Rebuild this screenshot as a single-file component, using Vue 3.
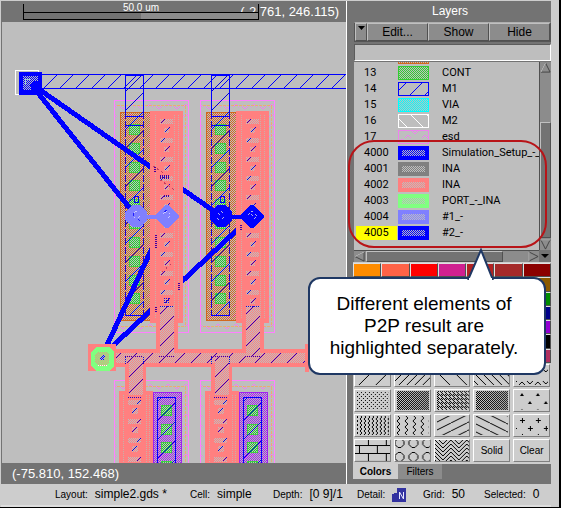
<script setup>
import { ref } from 'vue'

const filter = ref('')
const selectedId = ref(4005)

const layers = [
  { id: 13, name: 'CONT', color: '#32cd32', kind: 'checker' },
  { id: 14, name: 'M1', color: '#0000ff', kind: 'slash' },
  { id: 15, name: 'VIA', color: '#00ffff', kind: 'checker' },
  { id: 16, name: 'M2', color: '#ffffff', kind: 'backslash' },
  { id: 17, name: 'esd', color: '#ee82ee', kind: 'caret' },
  { id: 4000, name: 'Simulation_Setup_-_', color: '#0000ff', kind: 'framed' },
  { id: 4001, name: 'INA', color: '#808080', kind: 'framed' },
  { id: 4002, name: 'INA', color: '#ff8080', kind: 'framed' },
  { id: 4003, name: 'PORT_-_INA', color: '#80ff80', kind: 'framed' },
  { id: 4004, name: '#1_-', color: '#8080ff', kind: 'framed' },
  { id: 4005, name: '#2_-', color: '#0000ff', kind: 'framed' }
]

const palette = [
  '#ff8c00', '#ff6347', '#ff0000', '#d02090', '#b22222', '#a52a2a', '#8b0000',
  '#ffd700', '#ffa500', '#daa520', '#d2691e', '#cd853f', '#a0522d', '#8b5a00',
  '#adff2f', '#7fff00', '#00ff00', '#32cd32', '#3cb371', '#228b22', '#008b00',
  '#00ffff', '#00bfff', '#1e90ff', '#4169e1', '#0000ff', '#0000cd', '#00008b',
  '#ee82ee', '#da70d6', '#ba55d3', '#a020f0', '#8a2be2', '#9932cc', '#9400d3',
  '#ffffff', '#d3d3d3', '#bebebe', '#a9a9a9', '#808080', '#545454', '#000000',
  '#ffc0cb', '#ffb6c1', '#ff69b4', '#ff1493', '#db7093', '#c71585', '#b03060'
]

const fills = [
  'slash', 'slash-dense', 'back', 'back-dense', 'carets',
  'dots', 'mesh-a', 'mesh-b', 'mesh-a', 'peaks',
  'wave-dense', 'wave', 'rise', 'fall', 'plus',
  'brick', 'rings', 'weave'
]

const upper = [{ x: 0 }, { x: 86 }]
const lower = [{ x: 0 }, { x: 86 }]
const contacts = [124, 143, 162, 180, 199, 218, 237, 256, 275, 293]
const lowContacts = [405, 424, 442, 461]
const bumps = Array.from({ length: 10 }, (_, i) => 119 + i * 19)
const lowBumps = [396, 415, 434, 453]
</script>

<template>
  <div class="window">
    <main class="workspace">
      <section class="canvas">
        <header class="ruler-bar">
          <span class="coords">(-2.761, 246.115)</span>
          <div class="ruler">
            <span>50.0 um</span>
            <div class="ruler-track"><i></i></div>
          </div>
        </header>

        <svg class="drawing" viewBox="2 22 344 441" preserveAspectRatio="xMinYMin slice" shape-rendering="crispEdges">
          <defs>
            <pattern id="ck-orange" width="2" height="2" patternUnits="userSpaceOnUse">
              <rect width="1" height="1" fill="#d2691e" /><rect x="1" y="1" width="1" height="1" fill="#d2691e" />
            </pattern>
            <pattern id="ck-green" width="2" height="2" patternUnits="userSpaceOnUse">
              <rect width="1" height="1" fill="#1fd02c" /><rect x="1" y="1" width="1" height="1" fill="#1fd02c" />
            </pattern>
            <pattern id="ck-purple" width="2" height="2" patternUnits="userSpaceOnUse">
              <rect width="1" height="1" fill="#a020f0" /><rect x="1" y="1" width="1" height="1" fill="#a020f0" />
            </pattern>
            <pattern id="ck-pink" width="2" height="2" patternUnits="userSpaceOnUse">
              <rect width="2" height="2" fill="#bebebe" /><rect width="1" height="1" fill="#ff8080" /><rect x="1" y="1" width="1" height="1" fill="#ff8080" />
            </pattern>
            <pattern id="ck-port" width="2" height="2" patternUnits="userSpaceOnUse">
              <rect width="2" height="2" fill="#80ff80" /><rect width="1" height="1" fill="#e09a80" /><rect x="1" y="1" width="1" height="1" fill="#e09a80" />
            </pattern>
            <pattern id="ck-blue" width="2" height="2" patternUnits="userSpaceOnUse">
              <rect width="2" height="2" fill="#bebebe" /><rect width="1" height="1" fill="#0000ff" /><rect x="1" y="1" width="1" height="1" fill="#0000ff" />
            </pattern>
            <pattern id="hatch" width="16" height="16" x="4" patternUnits="userSpaceOnUse">
              <path d="M-1 17L17-1" stroke="#0000ff" />
            </pattern>
            <pattern id="hatch-col" width="19" height="19" x="6" y="2" patternUnits="userSpaceOnUse">
              <path d="M-1 20L20-1" stroke="#0000e0" />
            </pattern>
            <pattern id="hatch-dark" width="16" height="16" x="10" patternUnits="userSpaceOnUse">
              <path d="M-1 17L17-1" stroke="#2000c8" />
            </pattern>
            <pattern id="zig" width="18" height="10" x="3" y="1" patternUnits="userSpaceOnUse">
              <path d="M0 6l3-3l3 3M9 5l3 3l3-3" fill="none" stroke="#f080f0" />
            </pattern>
          </defs>

          <rect x="2" y="22" width="1000" height="441" fill="#bebebe" />

          <rect x="27.5" y="74.5" width="1000" height="14" fill="url(#hatch)" stroke="#0000ff" />
          <rect x="15.5" y="70.5" width="23" height="24" fill="none" stroke="#fff" />

          <g v-for="d in upper" :key="'u' + d.x" :transform="`translate(${d.x} 0)`">
            <rect x="114.5" y="100.5" width="74" height="232" fill="url(#zig)" stroke="#ff80ff" />
            <path d="M117 105.5H186M117 326.5H186M185.5 106V326" stroke="#e8b070" stroke-dasharray="3 1" />
            <rect x="120.5" y="112.5" width="30" height="208" fill="url(#ck-orange)" stroke="#d2691e" />
            <rect v-for="y in contacts" :key="y" x="129.5" :y="y + 0.5" width="10" height="10" fill="url(#ck-green)" stroke="#40d040" />
            <rect x="125" y="75" width="19" height="240" fill="url(#hatch-col)" />
            <path d="M125.5 75V112M143.5 75V112M125 75.5H144M125 116.5H144M125 125.5H144M125 315.5H144" stroke="#0000ff" />
            <path d="M125.5 112V315M143.5 112V315" stroke="#1a00d0" stroke-dasharray="7 2" />
            <rect x="134.5" y="196.5" width="4" height="6" fill="none" stroke="#0000ff" />
          </g>

          <g stroke="#0000ff" stroke-width="5">
            <path d="M30 83L136 216M30 83L221 216M102 356L167 216M102 356L252 216" />
          </g>

          <path d="M116 349H305V367H116Z" fill="#ff8080" />
          <path d="M116 353H305V363H116Z" fill="url(#ck-pink)" />
          <path d="M116 353H305V363H116Z" fill="url(#hatch-dark)" />
          <rect x="305" y="344" width="4" height="28" fill="#ff8080" />

          <g v-for="d in upper" :key="'b' + d.x" :transform="`translate(${d.x} 0)`">
            <rect x="150" y="111" width="33" height="212" fill="#ff8080" />
            <rect x="156" y="323" width="22" height="26" fill="#ff8080" />
            <path d="M160 306H174V356H160Z" fill="url(#ck-pink)" />
            <path d="M160 306H174V356H160Z" fill="url(#hatch-dark)" />
            <path d="M160 306.5H174M159 356.5H174" stroke="#2000c8" stroke-dasharray="1 1" />
            <path d="M155.5 115V318M178.5 115V318" stroke="#c8b0a8" stroke-dasharray="1 1" />
            <path d="M174.5 115V318" stroke="#c8b0a8" stroke-dasharray="1 1" />
            <g v-for="y in bumps" :key="y">
              <rect x="160" :y="y" width="13" height="5" fill="url(#ck-pink)" />
              <rect x="164" :y="y + 9" width="5" height="5" fill="url(#ck-pink)" />
              <path :d="`M161 ${y + 4}l4-4M165 ${y + 13}l5-5`" stroke="#2000c8" />
            </g>
          </g>
          <path d="M154.5 167v6M160 176h10M160 178h10M164 196h5M155.5 235v13M178.5 283v7M155.5 307v6M240.5 225v6" fill="none" stroke="#4000a0" stroke-width="2" stroke-dasharray="1 1" />
          <path d="M164 298h6M164 300h6M164 302h6" stroke="#2000c8" stroke-dasharray="1 1" />
          <path d="M153 166l12 8M160 180l16 11M162 272l10-9" stroke="#c04060" stroke-dasharray="2 3" />

          <g v-for="d in lower" :key="'l' + d.x" :transform="`translate(${d.x} 0)`">
            <rect x="114.5" y="380.5" width="74" height="100" fill="url(#zig)" stroke="#ff80ff" />
            <path d="M117 386.5H186M185.5 387V463" stroke="#e8b070" stroke-dasharray="3 1" />
            <rect x="125" y="367" width="21" height="24" fill="#ff8080" />
            <rect x="119" y="391" width="34" height="72" fill="#ff8080" />
            <path d="M129 357H143V395H129Z" fill="url(#ck-pink)" />
            <path d="M129 357H143V395H129Z" fill="url(#hatch-dark)" />
            <path d="M125 357V365M143 357V365M125 356.5H143M128 397.5H142" stroke="#2000c8" stroke-dasharray="1 1" />
            <path d="M123.5 395V463M146.5 395V463M149.5 395V463" stroke="#c8b0a8" stroke-dasharray="1 1" />
            <g v-for="y in lowBumps" :key="y">
              <rect x="128" :y="y + 4" width="13" height="5" fill="url(#ck-pink)" />
              <rect x="132" :y="y + 12" width="6" height="6" fill="url(#ck-pink)" />
              <path :d="`M137 ${y + 8}l4-4M132 ${y + 17}l5-5`" stroke="#2000c8" />
            </g>
            <rect x="153.5" y="392.5" width="28" height="90" fill="url(#ck-purple)" stroke="#a020f0" />
            <rect v-for="y in lowContacts" :key="y" x="161.5" :y="y + 0.5" width="10" height="10" fill="url(#ck-green)" stroke="#40d040" />
            <rect x="158" y="397" width="18" height="70" fill="url(#hatch-col)" />
            <path d="M157.5 470V397.5H175.5V470" fill="none" stroke="#0000ff" />
          </g>

          <rect x="19" y="72" width="23" height="23" fill="#0000ff" />
          <path d="M23 76H38V81H33L30 84L32 90H23Z" fill="url(#ck-blue)" />
          <path d="M25 79h6M25 79v6" stroke="#80e0e0" stroke-dasharray="1 1" />

          <path d="M145 217H160" stroke="#8080ff" stroke-width="4" />
          <path d="M132 205h8l7 7v8l-7 7h-8l-7-7v-8zM166 205h2l11 10v3l-11 10h-2l-11-10v-3z" fill="#8080ff" />
          <path d="M134 213l3-2M133 215l2 4M138 218l2-2M163 214l4-3l4 4l-4 4" fill="none" stroke="#c8c8ff" stroke-dasharray="1 1" />
          <path d="M133 213v3M138 219l2 2M164 212l3-2" stroke="#2020ff" />
          <path d="M230 217H245" stroke="#0000ff" stroke-width="4" />
          <path d="M217 205h8l7 7v8l-7 7h-8l-7-7v-8zM251 205h2l11 10v3l-11 10h-2l-11-10v-3z" fill="#0000ff" />
          <path d="M218 213l3 3M221 211l3 3M217 218l3 3M222 219l3-3M248 215l4-4l5 5l-5 5M251 214l3 3" fill="none" stroke="#b0b0e8" stroke-dasharray="1 1" />

          <rect x="88" y="344" width="28" height="27" fill="#ff8080" />
          <path d="M96 347h13l5 5v14l-5 5H96l-5-5v-14z" fill="#80ff80" />
          <path d="M98 352h8l3 3v8l-3 3h-8l-3-3v-8z" fill="url(#ck-port)" />
          <path d="M100 357h4v3h-4zM102 355h3v3h-3z" fill="url(#ck-blue)" />
          <path d="M98 365.5h10" stroke="#fff" stroke-dasharray="1 1" />
        </svg>

        <footer class="origin-bar">(-75.810, 152.468)</footer>
      </section>

      <aside class="sidebar">
        <h1>Layers</h1>
        <div class="actions">
          <button class="mini" aria-label="Menu"><svg viewBox="0 0 7 5"><path d="M0 0h7L3.500 4z" /></svg></button>
          <button>Edit...</button>
          <button>Show</button>
          <button>Hide</button>
        </div>
        <input v-model="filter" class="filter" type="text" aria-label="Filter layers">

        <div class="list-area">
          <ul class="layers">
            <li class="peek"><svg class="swatch" viewBox="0 0 31 14" shape-rendering="crispEdges"><rect x="0.5" y="0.5" width="30" height="13" fill="url(#ck-orange)" stroke="#d2691e" /></svg></li>
            <li v-for="l in layers" :key="l.id" :class="{ active: l.id === selectedId }" @click="selectedId = l.id">
              <b>{{ l.id }}</b>
              <svg class="swatch" viewBox="0 0 31 14" shape-rendering="crispEdges">
                <defs>
                  <pattern :id="'sw' + l.id" width="2" height="2" patternUnits="userSpaceOnUse">
                    <rect width="2" height="2" fill="#bebebe" />
                    <rect width="1" height="1" :fill="l.color" /><rect x="1" y="1" width="1" height="1" :fill="l.color" />
                  </pattern>
                </defs>
                <template v-if="l.kind === 'framed'">
                  <rect width="31" height="14" :fill="l.color" />
                  <rect x="4" y="4" width="23" height="6" :fill="`url(#sw${l.id})`" />
                </template>
                <rect v-else x="0.5" y="0.5" width="30" height="13" :stroke="l.color" :fill="l.kind === 'checker' ? `url(#sw${l.id})` : 'none'" />
                <path v-if="l.kind === 'slash'" d="M1 8L8 1M12 13L24 1M27 13l4-4" :stroke="l.color" />
                <path v-if="l.kind === 'backslash'" d="M1 5l8 8M13 1l12 12M29 1l2 2" :stroke="l.color" />
                <path v-if="l.kind === 'caret'" d="M7 8l3-3l3 3M24 8l3-3l3 3M14 1l3 3l3-3M1 12l4-3M19 12l2-2" :stroke="l.color" fill="none" />
              </svg>
              <span>{{ l.name }}</span>
            </li>
          </ul>
          <div class="vscroll">
            <svg viewBox="0 0 12 12"><path class="tri" d="M1 11L6 1L11 11Z" /><path class="lit" d="M1 11L6 1" /></svg>
            <i></i>
            <svg viewBox="0 0 12 12"><path class="tri" d="M1 1H11L6 11Z" /><path class="lit" d="M1 1h10" /></svg>
          </div>
          <div class="hscroll">
            <svg viewBox="0 0 12 12"><path class="tri" d="M11 1V11L1 6Z" /><path class="lit" d="M1 6L11 1" /></svg>
            <i></i>
            <svg viewBox="0 0 12 12"><path class="tri" d="M1 1V11L11 6Z" /><path class="lit" d="M1 1v10" /></svg>
          </div>
          <svg class="corner" viewBox="0 0 12 12"><path d="M2 4h8L6 8z" /></svg>
        </div>

        <div class="palette">
          <button v-for="c in palette" :key="c" :aria-label="c" :style="{ background: c }"></button>
        </div>

        <svg class="defs" aria-hidden="true">
          <defs>
            <pattern id="f-slash" width="17" height="17" x="2" y="5" patternUnits="userSpaceOnUse"><path d="M-1 18L18-1" /></pattern>
            <pattern id="f-slash-dense" width="8" height="8" patternUnits="userSpaceOnUse"><path d="M-1 9L9-1" /></pattern>
            <pattern id="f-back" width="17" height="17" x="0" y="5" patternUnits="userSpaceOnUse"><path d="M-1-1L18 18" /></pattern>
            <pattern id="f-back-dense" width="8" height="8" patternUnits="userSpaceOnUse"><path d="M-1-1L9 9" /></pattern>
            <pattern id="f-carets" width="16" height="12" patternUnits="userSpaceOnUse"><path d="M5 8l3-3l3 3M-3 4l3 3l3-3M13 4l3 3l3-3" /></pattern>
            <pattern id="f-dots" width="4" height="4" patternUnits="userSpaceOnUse"><path d="M0 .5h1M2 2.500h1" /></pattern>
            <pattern id="f-mesh-a" width="2" height="2" patternUnits="userSpaceOnUse"><path d="M0 .5h1M1 1.500h1" /></pattern>
            <pattern id="f-mesh-b" width="4" height="4" patternUnits="userSpaceOnUse"><path d="M0 .5h1M1 1.500h1M2 2.500h1M3 3.500h1M2 .5h1M3 1.500h1" /></pattern>
            <pattern id="f-peaks" width="16" height="16" y="2" patternUnits="userSpaceOnUse"><path class="solid" d="M6 4L8 1L10 4ZM-2 12L0 9L2 12ZM14 12L16 9L18 12Z" /></pattern>
            <pattern id="f-wave-dense" width="4" height="4" patternUnits="userSpaceOnUse"><path d="M1 0l2 2l-2 2" /></pattern>
            <pattern id="f-wave" width="8" height="6" patternUnits="userSpaceOnUse"><path d="M2 0l3 3l-3 3" /></pattern>
            <pattern id="f-rise" width="16" height="8" patternUnits="userSpaceOnUse"><path d="M-2 9L18-1" /></pattern>
            <pattern id="f-fall" width="16" height="8" patternUnits="userSpaceOnUse"><path d="M-2-1L18 9" /></pattern>
            <pattern id="f-plus" width="16" height="16" patternUnits="userSpaceOnUse"><path d="M6 5.500h5M8.500 3v5M14 13.500h2M0 13.500h3M.5 11v5" /></pattern>
            <pattern id="f-brick" width="18" height="16" y="5" patternUnits="userSpaceOnUse"><path d="M0 .5h18M0 8.500h18M4.500 0v8M13.500 8v8" /></pattern>
            <pattern id="f-rings" width="14" height="14" x="12" y="10" patternUnits="userSpaceOnUse"><path d="M5 2.500h3l3 3v3l-3 3H5l-3-3v-3z" /></pattern>
            <pattern id="f-weave" width="16" height="8" patternUnits="userSpaceOnUse"><path d="M0 4l4 4M0 0l8 8M4 0l4 4M8 4l4-4M8 8l8-8M12 8l4-4" /></pattern>
          </defs>
        </svg>
        <div class="fills">
          <button v-for="(f, i) in fills" :key="i" :aria-label="f">
            <svg viewBox="0 0 35 21" shape-rendering="crispEdges"><rect :x="i < 4 || i > 14 ? 0 : 2" :y="i < 15 ? 1 : 0" :width="i < 4 || i > 14 ? 35 : 32" :height="i < 15 ? 19 : 21" :fill="`url(#f-${f})`" /></svg>
          </button>
          <button>Solid</button>
          <button>Clear</button>
        </div>

        <nav class="tabs">
          <button class="current">Colors</button>
          <button>Filters</button>
        </nav>
      </aside>
    </main>

    <footer class="status">
      <p>Layout: <span>simple2.gds *</span></p>
      <p>Cell: <span>simple</span></p>
      <p>Depth: <span>[0 9]/1</span></p>
      <p>Detail:
        <svg class="detail" viewBox="0 0 14 14"><path d="M0 6h2V5h3V0h9v14H0z" fill="#3232a0" /><path d="M7.500 11V4L11.500 11V4" fill="none" stroke="#e8e8ff" /></svg>
      </p>
      <p>Grid: <span>50</span></p>
      <p>Selected: <span>0</span></p>
    </footer>

    <div class="ring"></div>
    <div class="callout">
      Different elements of<br>P2P result are<br>highlighted separately.
      <svg class="pointer" viewBox="0 0 30 32"><path d="M2 32L15 2L27 32" fill="#fff" stroke="#1f3864" stroke-width="2" /><path d="M3 31h23" stroke="#fff" stroke-width="2" /></svg>
    </div>
  </div>
</template>

<style>
body {
  margin: 0;
  background: #fff;
}
</style>

<style scoped>
.window {
  position: relative;
  margin-right: 2px;
  padding: 1px 8px 0 1px;
  background: #cdcdcd;
  border-right: 2px solid #000;
  border-bottom: 1px solid #000;
  font-family: "Liberation Sans", Arial, sans-serif;
  font-size: 12px;
  color: #000;
}
.window * {
  box-sizing: border-box;
}
button {
  font: inherit;
  color: inherit;
  padding: 0;
  margin: 0;
  border: 1px solid;
  border-radius: 0;
}
svg {
  display: block;
}
.workspace {
  display: grid;
  grid-template-columns: minmax(0, 1fr) 204px;
}
.canvas {
  display: flex;
  flex-direction: column;
  border-left: 1px solid #737373;
  border-right: 1px solid #fff;
}
.ruler-bar,
.origin-bar {
  position: relative;
  height: 21px;
  background: #737373;
  color: #fff;
  font-size: 13px;
  line-height: 21px;
}
.coords {
  display: block;
  text-align: right;
  padding-right: 7px;
}
.origin-bar {
  padding-left: 10px;
}
.ruler {
  position: absolute;
  left: 21px;
  top: 3px;
  width: 236px;
  height: 16px;
  border: solid #000;
  border-width: 0 1px;
  text-align: center;
  font-size: 10px;
  line-height: 8px;
}
.ruler-track {
  display: flex;
  height: 8px;
  background: #737373;
  border: solid #000;
  border-width: 1px 0;
}
.ruler span {
  display: block;
}
.ruler-track i {
  width: 50%;
  margin-left: 50%;
  background: #8c8c8c;
}
.drawing {
  width: 100%;
  height: 441px;
}
.sidebar {
  display: flex;
  flex-direction: column;
  padding-left: 6px;
  background: #737373;
}
h1 {
  margin: 0;
  padding-right: 4px;
  color: #fff;
  font-size: 12px;
  font-weight: normal;
  line-height: 21px;
  text-align: center;
}
.actions {
  display: grid;
  grid-template-columns: 12px 1fr 1fr 1fr;
  height: 20px;
  margin-left: 1px;
  border: 1px solid #555;
  border-top-color: #b0b0b0;
}
.actions button {
  background: #8c8c8c;
  border-color: #c0c0c0 #505050 #505050 #c0c0c0;
}
.actions .mini svg {
  width: 7px;
  height: 5px;
  margin: -6px auto 0;
}
.filter {
  width: calc(100% - 1px);
  height: 17px;
  margin: 2px 0 0 1px;
  padding: 0 3px;
  border: 1px solid #fff;
  border-top-color: #5c5c5c;
  border-left-color: #5c5c5c;
  border-radius: 0;
  background: #bebebe;
  font: inherit;
}
.list-area {
  display: grid;
  grid-template-columns: minmax(0, 1fr) 12px;
  grid-template-rows: 188px 12px;
  margin: 1px 0 0 1px;
}
.layers {
  list-style: none;
  margin: 0;
  padding: 0;
  overflow: hidden;
  background: #bebebe;
  font-family: Roboto, "Liberation Sans", sans-serif;
  font-size: 11px;
}
.layers li {
  display: grid;
  grid-template-columns: 41px 31px 1fr;
  column-gap: 1px;
  align-items: center;
  height: 16px;
  padding-left: 2px;
  line-height: 14px;
  white-space: nowrap;
}
.layers .peek {
  margin-top: -13px;
  padding-left: 44px;
}
.layers b {
  padding-left: 8px;
  font-weight: normal;
}
.layers .active b {
  background: #ffff00;
}
.layers span {
  padding-left: 12px;
}
.swatch {
  width: 31px;
  height: 14px;
}
.vscroll,
.hscroll {
  display: flex;
  background: #8c8c8c;
  border: solid #505050;
}
.vscroll {
  flex-direction: column;
  border-width: 0 0 0 1px;
}
.hscroll {
  border-width: 1px 0 0;
}
.vscroll svg,
.hscroll svg {
  width: 11px;
  height: 11px;
  flex: none;
}
.vscroll i {
  height: 116px;
  margin: 49px 0 auto;
  background: #737373;
  border: 1px solid;
  border-color: #c0c0c0 #505050 #505050 #c0c0c0;
}
.hscroll i {
  width: 137px;
  margin: 0 auto 0 1px;
  background: #737373;
  border: 1px solid;
  border-color: #c0c0c0 #505050 #505050 #c0c0c0;
}
.tri {
  fill: #8c8c8c;
  stroke: #404040;
}
.lit {
  stroke: #d0d0d0;
}
.corner {
  width: 12px;
  height: 12px;
}
.palette {
  display: grid;
  grid-template-columns: repeat(7, 1fr);
  grid-auto-rows: 1fr;
  height: 101px;
  border-top: 1px solid #cdcdcd;
}
.palette button {
  border-color: #e0e0e0 #505050 #505050 #e0e0e0;
}
.defs {
  position: absolute;
  width: 0;
  height: 0;
}
.defs path {
  fill: none;
  stroke: #000;
}
.defs .solid {
  fill: #000;
  stroke: none;
}
.fills {
  display: grid;
  grid-template-columns: repeat(5, 1fr);
  grid-auto-rows: 23px;
  gap: 2px 3px;
  padding: 1px 1px 2px;
  background: #cdcdcd;
}
.fills button {
  overflow: hidden;
  background: #cdcdcd;
  border-color: #fff #808080 #808080 #fff;
  font-size: 10px;
}
.fills svg {
  width: 100%;
  height: 21px;
}
.tabs {
  display: flex;
  height: 19px;
}
.tabs button {
  height: 15px;
  border: 0;
  background: #8c8c8c;
  font-size: 10px;
  width: 44px;
}
.tabs .current {
  width: 45px;
  background: #cdcdcd;
  font-weight: bold;
}
.status {
  display: grid;
  grid-template-columns: 135px 83px 84px 66px 61px 1fr;
  height: 23px;
  padding-left: 54px;
  border-bottom: 2px solid #dedede;
  line-height: 21px;
}
.status p {
  display: flex;
  align-items: center;
  gap: 7px;
  margin: 0;
  white-space: nowrap;
  font-size: 10px;
}
.status span {
  font-size: 12px;
}
.detail {
  width: 14px;
  height: 14px;
}
.ring {
  position: absolute;
  top: 140px;
  right: 12px;
  width: 199px;
  height: 108px;
  border: 2px solid #b81418;
  border-radius: 26px;
  pointer-events: none;
}
.callout {
  position: absolute;
  top: 277px;
  right: 13px;
  width: 238px;
  height: 98px;
  padding: 14px 6px 14px 0;
  border: 2px solid #1f3864;
  border-radius: 12px;
  background: #fff;
  font-size: 19px;
  line-height: 22px;
  text-align: center;
  white-space: nowrap;
}
.pointer {
  position: absolute;
  top: -31px;
  left: 156px;
  width: 30px;
  height: 32px;
}
</style>
